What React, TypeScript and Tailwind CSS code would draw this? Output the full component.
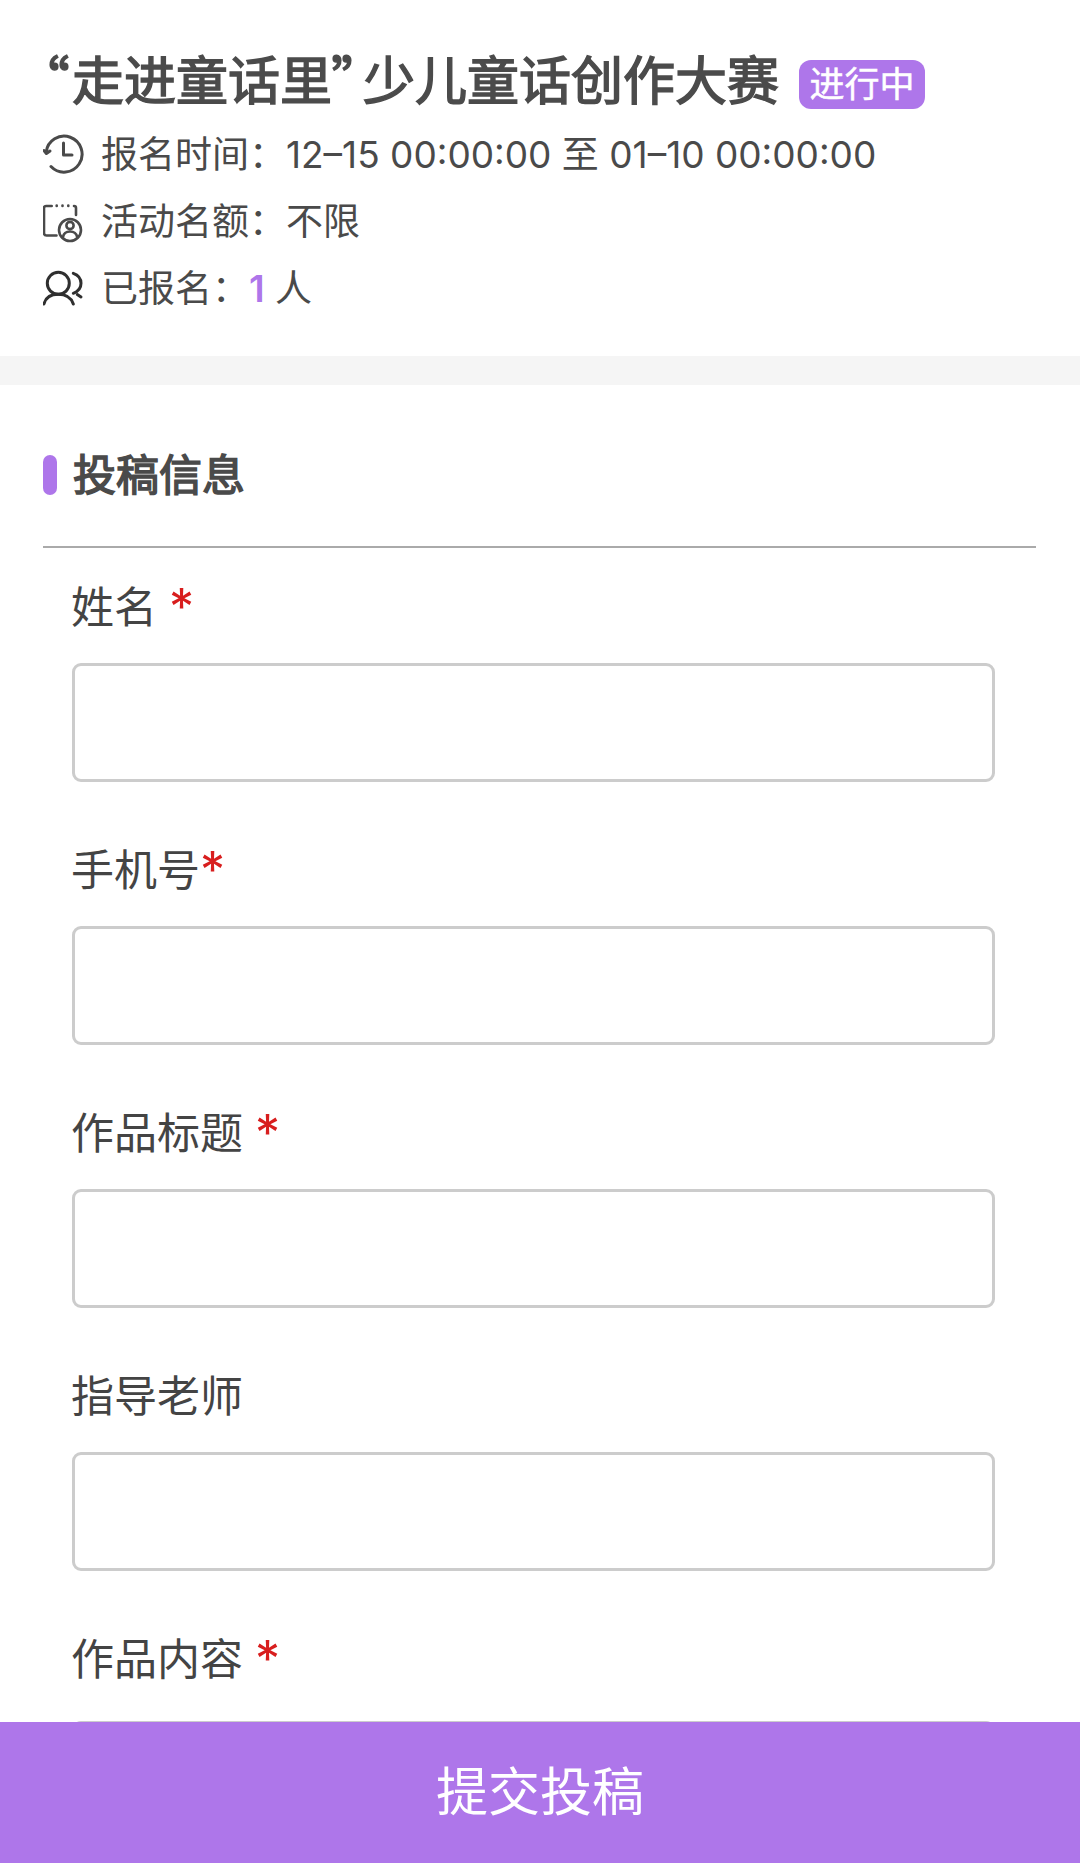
import type { ReactNode } from "react";

const FONT = "font-['Inter','Noto_Sans_CJK_SC',sans-serif]";

function ClockIcon() {
  return (
    <svg width="42" height="42" viewBox="0 0 42 42" fill="none" stroke="#4a4a4a" strokeWidth="3" strokeLinecap="round" strokeLinejoin="round">
      <path d="M3.2 18 A18 18 0 1 1 8 32.5" />
      <path d="M1 16.5 L3.4 19.5 L7 17" />
      <path d="M20.5 9 V21 H29" />
    </svg>
  );
}

function QuotaIcon() {
  return (
    <svg width="42" height="42" viewBox="0 0 42 42" fill="none" stroke="#4a4a4a" strokeWidth="2.6" strokeLinecap="round" strokeLinejoin="round">
      <path d="M8.7 5 H3 Q1 5 1 7 V32 Q1 34.5 3.5 34.5 H13.5" />
      <path d="M13.7 4.5 V5 M19.5 4.5 V5 M25.3 4.5 V5" />
      <path d="M31 5 Q33 5 33 7 V14" />
      <circle cx="27" cy="29" r="11" />
      <circle cx="27" cy="24.5" r="3.6" />
      <path d="M20 36 Q21 30.5 27 30.5 Q33 30.5 34.2 36" />
    </svg>
  );
}

function PeopleIcon() {
  return (
    <svg width="42" height="42" viewBox="0 0 42 42" fill="none" stroke="#2f2f2f" strokeWidth="3" strokeLinecap="round" strokeLinejoin="round">
      <circle cx="15.3" cy="15.3" r="11" />
      <path d="M1 36 Q3.5 26.3 15.3 26.3 Q27 26.3 30.3 36" />
      <path d="M30.3 5.3 Q38 8 38 15.3 Q38 22.5 30.3 25.3" />
      <path d="M34.3 26.5 L38 29" />
    </svg>
  );
}

function InfoRow({ icon, children }: { icon: ReactNode; children: ReactNode }) {
  return (
    <div className="flex h-[67px] items-center gap-[16px] text-[37px] text-[#4a4a4a]">
      {icon}
      <span>{children}</span>
    </div>
  );
}

function Field({ label, star, starClass = "ml-[12px]", inputClass = "mt-[31px]" }: { label: string; star?: boolean; starClass?: string; inputClass?: string }) {
  return (
    <div>
      <div className="-ml-px flex h-[50px] items-center text-[43px] leading-[50px] text-[#444444]">
        <span>{label}</span>
        {star && <span className={`text-[50px] leading-[50px] text-[#d81e1e] ${starClass}`}>*</span>}
      </div>
      <div className={`h-[119px] w-[923px] rounded-[9px] border-[3px] border-[#cccccc] bg-white ${inputClass}`} />
    </div>
  );
}

export default function App() {
  return (
    <div className={`flex h-[1863px] w-[1080px] flex-col overflow-hidden bg-white ${FONT}`}>
      <div className="min-h-0 flex-1 overflow-hidden">
        <section className="h-[356px] pl-[43px] pt-[50px]">
          <div className="flex h-[60px] w-[1000px] items-center">
            <h1 className="text-[52px] font-normal leading-[60px] whitespace-nowrap text-[#4b4b4b] [-webkit-text-stroke:1.5px_#4b4b4b]">
              <span className="font-['Noto_Sans_CJK_SC',sans-serif] tracking-[3px] [font-feature-settings:'palt']">“</span>走进童话里<span className="font-['Noto_Sans_CJK_SC',sans-serif] tracking-[5px] [font-feature-settings:'palt']">”</span>少儿童话创作大赛
            </h1>
            <span className="ml-[20px] mt-[9px] flex h-[49px] w-[126px] items-center justify-center rounded-[12px] bg-[#ae76ea] text-[35px] text-white [-webkit-text-stroke:0.5px_#ffffff]">进行中</span>
          </div>
          <div className="mt-[11px]">
            <InfoRow icon={<ClockIcon />}>报名时间：12–15 00:00:00 至 01–10 00:00:00</InfoRow>
            <InfoRow icon={<QuotaIcon />}>活动名额：不限</InfoRow>
            <InfoRow icon={<PeopleIcon />}>
              已报名：<span className="font-semibold text-[#ae76ea]">1</span> 人
            </InfoRow>
          </div>
        </section>

        <div className="h-[29px] bg-[#f5f5f5]" />

        <section className="pl-[43px] pr-[44px] pt-[70px]">
          <div className="flex h-[40px] items-center gap-[16px]">
            <div className="h-[40px] w-[14px] rounded-full bg-[#ae76ea]" />
            <h2 className="text-[43px] font-normal text-[#4a4a4a] [-webkit-text-stroke:1.5px_#4a4a4a]">投稿信息</h2>
          </div>
          <div className="mt-[51px] h-[2px] bg-[#aaaaaa]" />
          <div className="flex flex-col gap-[63px] pl-[29px] pt-[34px]">
            <Field label="姓名" star />
            <Field label="手机号" star starClass="" />
            <Field label="作品标题" star />
            <Field label="指导老师" />
            <Field label="作品内容" star inputClass="mt-[37px]" />
          </div>
        </section>
      </div>

      <button type="button" className="h-[141px] w-full shrink-0 bg-[#ae76ea] text-[52px] text-white">
        提交投稿
      </button>
    </div>
  );
}
